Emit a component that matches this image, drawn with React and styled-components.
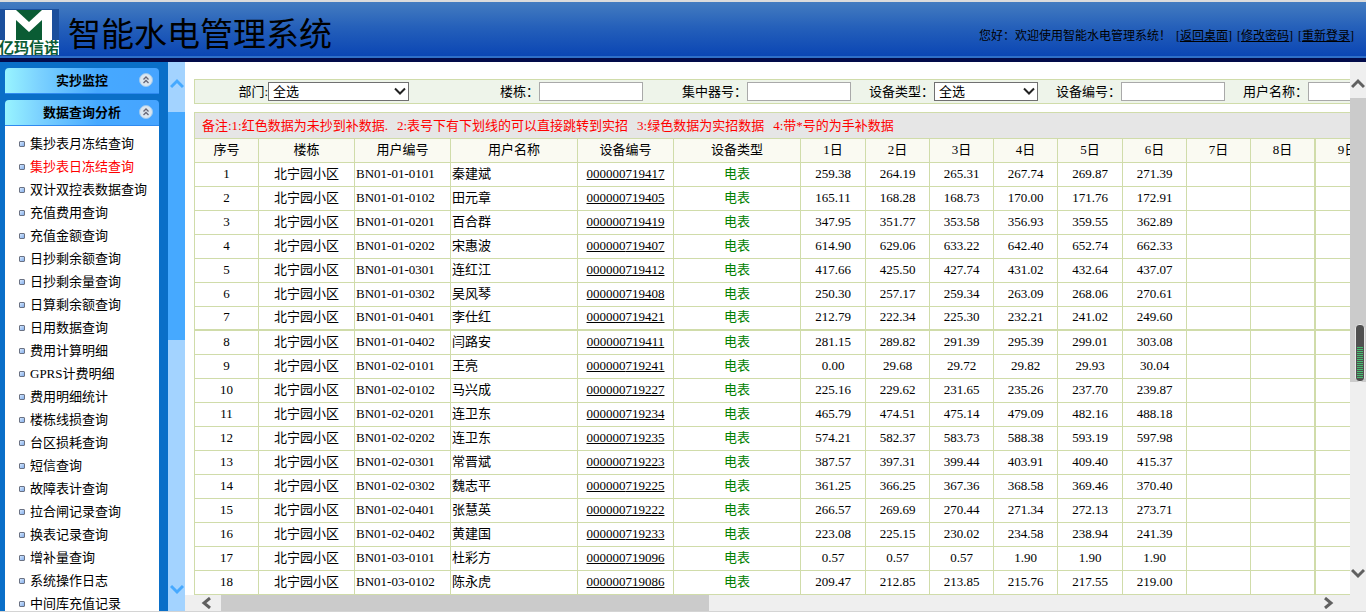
import React from 'react';
import styled, { createGlobalStyle, css, ThemeProvider } from 'styled-components';

const theme = {
  line: '#d0dcaa',
  blue: '#0a6fc8',
  sky: '#46a9ff',
  skyLight: '#a3d3ff',
  track: '#efefef',
  thumb: '#cbcbcb',
  font: { s: '12px', m: '13px', l: '33px' },
};

const GlobalStyle = createGlobalStyle`
  *,
  *::before {
    box-sizing: border-box;
  }
  body {
    margin: 0;
    background: white;
    color: black;
    font-family: 'Liberation Serif', 'Noto Sans CJK SC', serif;
    font-size: 13px;
  }
  a {
    color: inherit;
  }
`;

const Page = styled.div`
  display: flex;
  flex-direction: column;
  height: 100vh;
  overflow: hidden;
  border-bottom: 1px solid white;
`;

const Header = styled.header`
  flex: none;
  display: flex;
  align-items: center;
  height: 62px;
  padding: 4px 12px 0 0;
  border-top: 2px solid #dcdcdc;
  border-bottom: 4px solid #020b4a;
  background: linear-gradient(#447cc0, #2560ba 45%, #0b46b4 96%, #2f6fc8 97%);
`;

const Logo = styled.svg`
  flex: none;
  width: 60px;
  height: 47px;
`;

const Title = styled.h1`
  flex: 1;
  margin: 6px 0 0 8px;
  font-size: ${({ theme }) => theme.font.l};
  font-weight: 400;
  line-height: 44px;
  white-space: nowrap;
`;

const Greeting = styled.div`
  margin-top: 8px;
  font-size: ${({ theme }) => theme.font.s};
  line-height: 18px;
  white-space: nowrap;
`;

const GreetingLink = styled.span`
  margin-left: 5px;
`;

const Body = styled.div`
  flex: 1;
  display: flex;
  min-height: 0;
  border-bottom: 1px solid #d4d4d4;
`;

const Sidebar = styled.nav`
  flex: none;
  display: flex;
  flex-direction: column;
  width: 168px;
  padding: 6px 9px 0 5px;
  overflow: hidden;
  background: ${({ theme }) => theme.blue};
`;

const GroupButton = styled.button`
  flex: none;
  display: grid;
  grid-template-columns: 1fr 14px;
  align-items: center;
  height: 26px;
  padding: 0 6px 2px 20px;
  border: 0;
  border-bottom: 1px solid #2f8af0;
  border-radius: 4px 4px 0 0;
  background: linear-gradient(90deg, #98f4ff, #7cd2ff 22%, #46a9ff 60%, #46a4ff);
  font: inherit;
  font-weight: 700;
  color: black;

  & + & {
    margin-top: 6px;
  }
`;

const Menu = styled.ul`
  flex: 1;
  min-height: 0;
  margin: 0;
  padding: 6px 0 0 14px;
  overflow: hidden;
  list-style: none;
  background: white;
`;

const MenuItem = styled.li`
  display: flex;
  align-items: center;
  height: 23px;
  white-space: nowrap;

  &::before {
    content: '';
    width: 6px;
    height: 6px;
    margin-right: 5px;
    border: 1px solid #6a7284;
    border-radius: 1px;
    background: linear-gradient(135deg, #d5e8ff, #84aeea);
  }
`;

const MenuLink = styled.a`
  line-height: 19px;
  text-decoration: none;
  color: ${({ $active }) => ($active ? 'red' : 'black')};
`;

const ScrollBar = styled.div`
  flex: none;
  display: flex;
  align-items: center;
  background: ${({ theme, $sky }) => ($sky ? theme.skyLight : theme.track)};
  color: ${({ theme, $sky }) => ($sky ? theme.sky : '#606060')};
  ${({ $horizontal }) =>
    $horizontal
      ? css`
          height: 16px;
        `
      : css`
          flex-direction: column;
          width: ${({ $sky }) => ($sky ? '17px' : '16px')};
        `}
`;

const Track = styled.div`
  flex: 1;
  align-self: stretch;
  min-height: 0;
`;

const Thumb = styled.div`
  position: relative;
  background: ${({ theme, $sky }) => ($sky ? theme.sky : theme.thumb)};
  ${({ $horizontal, $size }) =>
    $horizontal
      ? css`
          width: ${$size};
          height: 100%;
        `
      : css`
          height: ${$size};
        `}
`;

const ArrowButton = styled.button`
  flex: none;
  display: flex;
  align-items: center;
  justify-content: center;
  width: ${({ $w }) => $w};
  height: ${({ $h }) => $h};
  padding: ${({ $pad }) => $pad || 0};
  border: 0;
  background: none;
  color: inherit;
`;

const Grip = styled.div`
  position: absolute;
  right: 1px;
  bottom: 0;
  width: 10px;
  height: 58px;
  padding: 22px 1px 3px;
  border: 1px solid #e8e8e8;
  border-radius: 4px;
  background: #505050;

  &::before {
    content: '';
    display: block;
    height: 100%;
    background: repeating-linear-gradient(#44c070 0 1px, #505050 1px 2px);
  }
`;

const Main = styled.main`
  flex: 1;
  display: flex;
  flex-direction: column;
  min-width: 0;
`;

const Content = styled.div`
  flex: 1;
  min-height: 0;
  padding: 17px 0 0 9px;
  overflow: hidden;
`;

const Filters = styled.form`
  display: grid;
  grid-template-columns: 73px 141px 130px 104px 104px 104px 83px 104px 83px 104px 83px 104px;
  align-items: center;
  width: 1400px;
  height: 25px;
  border: 1px solid ${({ theme }) => theme.line};
  background: #eef4ea;
`;

const Label = styled.label`
  padding-bottom: 2px;
  text-align: right;
  white-space: nowrap;
`;

const TextBox = styled.input`
  width: 100%;
  height: 19px;
  border: 1px solid #a9a9a9;
  background: white;
  font: inherit;
`;

const SelectWrapper = styled.div`
  position: relative;
  height: 19px;
`;

const SelectBox = styled.select`
  appearance: none;
  display: block;
  width: 100%;
  height: 100%;
  padding: 0 4px;
  border: 1px solid #707070;
  border-radius: 0;
  background: white;
  color: black;
  font: inherit;
  line-height: 17px;
`;

const SelectArrow = styled.svg`
  position: absolute;
  top: 5px;
  right: 3px;
  pointer-events: none;
`;

const Notes = styled.div`
  display: flex;
  align-items: center;
  gap: 9px;
  width: 1400px;
  height: 26px;
  margin-top: 8px;
  padding: 0 0 3px 7px;
  border: 1px solid ${({ theme }) => theme.line};
  border-bottom: 0;
  background: #e6e6e6;
  color: red;
  white-space: nowrap;
`;

const Table = styled.table`
  width: 1400px;
  table-layout: fixed;
  border-collapse: separate;
  border-spacing: 0;
  border-top: 1px solid ${({ theme }) => theme.line};
  border-left: 1px solid ${({ theme }) => theme.line};
`;

const cell = css`
  height: 24px;
  padding: 0 1px 2px;
  border-right: 1px solid ${({ theme }) => theme.line};
  border-bottom: 1px solid ${({ theme }) => theme.line};
  line-height: 20px;
  font-weight: 400;
  white-space: nowrap;

  &:nth-child(14) {
    border-right-width: 2px;
  }
`;

const HeadCell = styled.th`
  ${cell}
  background: #fafaf2;
`;

const Row = styled.tr`
  &:nth-child(7) td {
    border-bottom-width: 2px;
  }
`;

const Cell = styled.td`
  ${cell}
  text-align: ${({ $left }) => ($left ? 'left' : 'center')};
  color: ${({ $green }) => ($green ? 'green' : 'black')};
`;

const menu = [
  '集抄表月冻结查询',
  '集抄表日冻结查询',
  '双计双控表数据查询',
  '充值费用查询',
  '充值金额查询',
  '日抄剩余额查询',
  '日抄剩余量查询',
  '日算剩余额查询',
  '日用数据查询',
  '费用计算明细',
  'GPRS计费明细',
  '费用明细统计',
  '楼栋线损查询',
  '台区损耗查询',
  '短信查询',
  '故障表计查询',
  '拉合闸记录查询',
  '换表记录查询',
  '增补量查询',
  '系统操作日志',
  '中间库充值记录',
];

const notes = [
  '备注:1:红色数据为未抄到补数据.',
  '2:表号下有下划线的可以直接跳转到实招',
  '3:绿色数据为实招数据',
  '4:带*号的为手补数据',
];

const filters = [
  { id: 'dept', label: '部门:', select: true },
  { id: 'building', label: '楼栋：' },
  { id: 'collector', label: '集中器号：' },
  { id: 'type', label: '设备类型：', select: true },
  { id: 'device', label: '设备编号：' },
  { id: 'user', label: '用户名称：' },
];

const columns = [
  ['序号', 64],
  ['楼栋', 96],
  ['用户编号', 96],
  ['用户名称', 127],
  ['设备编号', 96],
  ['设备类型', 127],
  ['1日', 65],
  ['2日', 64],
  ['3日', 64],
  ['4日', 64],
  ['5日', 65],
  ['6日', 64],
  ['7日', 64],
  ['8日', 65],
  ['9日', 64],
  ['10日'],
];

const rows = [
  ['01-01-0101', '秦建斌', '719417', '259.38', '264.19', '265.31', '267.74', '269.87', '271.39'],
  ['01-01-0102', '田元章', '719405', '165.11', '168.28', '168.73', '170.00', '171.76', '172.91'],
  ['01-01-0201', '百合群', '719419', '347.95', '351.77', '353.58', '356.93', '359.55', '362.89'],
  ['01-01-0202', '宋惠波', '719407', '614.90', '629.06', '633.22', '642.40', '652.74', '662.33'],
  ['01-01-0301', '连红江', '719412', '417.66', '425.50', '427.74', '431.02', '432.64', '437.07'],
  ['01-01-0302', '吴风琴', '719408', '250.30', '257.17', '259.34', '263.09', '268.06', '270.61'],
  ['01-01-0401', '李仕红', '719421', '212.79', '222.34', '225.30', '232.21', '241.02', '249.60'],
  ['01-01-0402', '闫路安', '719411', '281.15', '289.82', '291.39', '295.39', '299.01', '303.08'],
  ['01-02-0101', '王亮', '719241', '0.00', '29.68', '29.72', '29.82', '29.93', '30.04'],
  ['01-02-0102', '马兴成', '719227', '225.16', '229.62', '231.65', '235.26', '237.70', '239.87'],
  ['01-02-0201', '连卫东', '719234', '465.79', '474.51', '475.14', '479.09', '482.16', '488.18'],
  ['01-02-0202', '连卫东', '719235', '574.21', '582.37', '583.73', '588.38', '593.19', '597.98'],
  ['01-02-0301', '常晋斌', '719223', '387.57', '397.31', '399.44', '403.91', '409.40', '415.37'],
  ['01-02-0302', '魏志平', '719225', '361.25', '366.25', '367.36', '368.58', '369.46', '370.40'],
  ['01-02-0401', '张慧英', '719222', '266.57', '269.69', '270.44', '271.34', '272.13', '273.71'],
  ['01-02-0402', '黄建国', '719233', '223.08', '225.15', '230.02', '234.58', '238.94', '241.39'],
  ['01-03-0101', '杜彩方', '719096', '0.57', '0.57', '0.57', '1.90', '1.90', '1.90'],
  ['01-03-0102', '陈永虎', '719086', '209.47', '212.85', '213.85', '215.76', '217.55', '219.00'],
];

const chevrons = {
  up: 'M1 9 L7 3 L13 9',
  down: 'M1 3 L7 9 L13 3',
  left: 'M10 1 L4 6 L10 11',
  right: 'M4 1 L10 6 L4 11',
};

const Arrow = ({ dir, label, w, h, pad }) => (
  <ArrowButton type="button" aria-label={label} $w={w} $h={h} $pad={pad}>
    <svg width="14" height="12" viewBox="0 0 14 12">
      <path d={chevrons[dir]} fill="none" stroke="currentColor" strokeWidth="3" />
    </svg>
  </ArrowButton>
);

const Collapse = () => (
  <svg width="14" height="14" viewBox="0 0 14 14">
    <circle cx="7" cy="7" r="6.5" fill="#dce6ee" stroke="#9cc8ee" />
    <path
      d="M4.5 6.5 L7 4 L9.5 6.5 M4.5 10 L7 7.5 L9.5 10"
      fill="none"
      stroke="#667"
      strokeWidth="1.3"
    />
  </svg>
);

const Field = ({ id, label, select }) => (
  <>
    <Label htmlFor={id}>{label}</Label>
    {select ? (
      <SelectWrapper>
        <SelectBox id={id}>
          <option>全选</option>
        </SelectBox>
        <SelectArrow width="12" height="9" viewBox="0 0 12 9">
          <path d="M1 1.5 L6 6.5 L11 1.5" fill="none" stroke="#222" strokeWidth="2" />
        </SelectArrow>
      </SelectWrapper>
    ) : (
      <TextBox id={id} type="text" />
    )}
  </>
);

const DataTable = () => (
  <Table>
    <colgroup>
      {columns.map(([name, width]) => (
        <col key={name} width={width} />
      ))}
    </colgroup>
    <thead>
      <tr>
        {columns.map(([name]) => (
          <HeadCell key={name}>{name}</HeadCell>
        ))}
      </tr>
    </thead>
    <tbody>
      {rows.map(([code, user, device, ...values], i) => (
        <Row key={device}>
          <Cell>{i + 1}</Cell>
          <Cell>北宁园小区</Cell>
          <Cell $left>BN{code}</Cell>
          <Cell $left>{user}</Cell>
          <Cell>
            <a href="#device">000000{device}</a>
          </Cell>
          <Cell $green>电表</Cell>
          {columns.slice(6).map(([day], d) => (
            <Cell key={day}>{values[d]}</Cell>
          ))}
        </Row>
      ))}
    </tbody>
  </Table>
);

const App = () => (
  <ThemeProvider theme={theme}>
    <GlobalStyle />
    <Page>
      <Header>
        <Logo viewBox="0 0 60 47">
          <rect width="59" height="47" fill="#1b4f9c" />
          <rect x="5" y="1" width="47" height="31" fill="white" />
          <path d="M16 1 H42 L29 13 Z" fill="#0a5c34" />
          <path d="M16 11 L29 23 L42 11 V31 H16 Z" fill="#0a5c34" />
          <rect y="31" width="59" height="15" fill="white" />
          <text x="-1" y="44" fontSize="15" fontWeight="700" fill="#0a5c34">
            亿玛信诺
          </text>
        </Logo>
        <Title>智能水电管理系统</Title>
        <Greeting>
          您好：欢迎使用智能水电管理系统！
          {['返回桌面', '修改密码', '重新登录'].map((name) => (
            <GreetingLink key={name}>
              [<a href="#top">{name}</a>]
            </GreetingLink>
          ))}
        </Greeting>
      </Header>
      <Body>
        <Sidebar>
          <GroupButton type="button">
            实抄监控
            <Collapse />
          </GroupButton>
          <GroupButton type="button">
            数据查询分析
            <Collapse />
          </GroupButton>
          <Menu>
            {menu.map((name, i) => (
              <MenuItem key={name}>
                <MenuLink href="#menu" $active={i === 1}>
                  {name}
                </MenuLink>
              </MenuItem>
            ))}
          </Menu>
        </Sidebar>
        <ScrollBar $sky>
          <Arrow dir="up" label="向上" w="17px" h="50px" pad="0 0 6px" />
          <Track>
            <Thumb $sky $size="50%" />
          </Track>
          <Arrow dir="down" label="向下" w="17px" h="44px" />
        </ScrollBar>
        <Main>
          <Content>
            <Filters>
              {filters.map((filter) => (
                <Field key={filter.id} {...filter} />
              ))}
            </Filters>
            <Notes>
              {notes.map((note) => (
                <span key={note}>{note}</span>
              ))}
            </Notes>
            <DataTable />
          </Content>
          <ScrollBar $horizontal>
            <Arrow dir="left" label="向左" w="36px" h="16px" pad="0 0 0 8px" />
            <Track>
              <Thumb $horizontal $size="45%" />
            </Track>
            <Arrow dir="right" label="向右" w="44px" h="16px" />
          </ScrollBar>
        </Main>
        <ScrollBar>
          <Arrow dir="up" label="向上" w="16px" h="36px" pad="8px 0 0" />
          <Track>
            <Thumb $size="65%">
              <Grip />
            </Thumb>
          </Track>
          <Arrow dir="down" label="向下" w="16px" h="76px" />
        </ScrollBar>
      </Body>
    </Page>
  </ThemeProvider>
);

export default App;
